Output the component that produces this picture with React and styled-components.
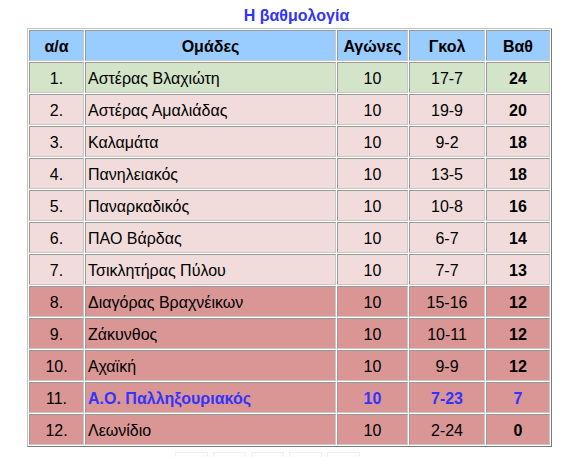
import React from "react";
import styled, { createGlobalStyle } from "styled-components";

const GlobalStyle = createGlobalStyle`
    body {
        margin: 0;
        background: #ffffff;
        font-family: "Liberation Sans", Arial, sans-serif;
    }
`

const Page = styled.div`
    padding: 7px 0 0 27px;
    width: 525px;
`

const Titlos = styled.div`
    text-align: center;
    padding-left: 14px;
    font-size: 16px;
    font-weight: bold;
    color: #3333ff;
    line-height: 18px;
    margin-bottom: 3px;
`

const Pinakas = styled.table`
    border: 1px solid;
    border-color: #c4c4c4 #7a7a7a #7a7a7a #c4c4c4;
    border-spacing: 1px;
    table-layout: fixed;
    width: 525px;
    font-size: 16px;
`

const Kelli = styled.td`
    box-sizing: border-box;
    border: 1px solid;
    border-color: #9a9a9a #c8c8c8 #c8c8c8 #9a9a9a;
    height: 31px;
    padding: 2px 2px 0;
    width: ${p => p.$w ? p.$w + "px" : "auto"};
    text-align: ${p => p.$align || "center"};
    font-weight: ${p => p.$bold ? "bold" : "normal"};
    background: ${p => p.$bg};
    color: ${p => p.$blue ? "#3333ff" : "#000000"};
`

const Epikefalida = styled(Kelli).attrs({ as: "th" })`
    font-weight: bold;
    background: #99ccff;
`

const Koumpia = styled.div`
    display: flex;
    gap: 5px;
    margin: 5px 0 0 148px;
`

const Koumpi = styled.div`
    width: 31px;
    height: 20px;
    border: 1px solid #f0f0f0;
    border-bottom: none;
    background: #fdfdfd;
`

const xromata = {
    prwtos: "#d3e4c9",
    mesi: "#f2dcdb",
    katw: "#d99694"
}

const omades = [
    ["1.", "Αστέρας Βλαχιώτη", "10", "17-7", "24", "prwtos"],
    ["2.", "Αστέρας Αμαλιάδας", "10", "19-9", "20", "mesi"],
    ["3.", "Καλαμάτα", "10", "9-2", "18", "mesi"],
    ["4.", "Πανηλειακός", "10", "13-5", "18", "mesi"],
    ["5.", "Παναρκαδικός", "10", "10-8", "16", "mesi"],
    ["6.", "ΠΑΟ Βάρδας", "10", "6-7", "14", "mesi"],
    ["7.", "Τσικλητήρας Πύλου", "10", "7-7", "13", "mesi"],
    ["8.", "Διαγόρας Βραχνέικων", "10", "15-16", "12", "katw"],
    ["9.", "Ζάκυνθος", "10", "10-11", "12", "katw"],
    ["10.", "Αχαϊκή", "10", "9-9", "12", "katw"],
    ["11.", "Α.Ο. Παλληξουριακός", "10", "7-23", "7", "katw", true],
    ["12.", "Λεωνίδιο", "10", "2-24", "0", "katw"]
]

export default function App() {
    return (
        <Page>
            <GlobalStyle />
            <Titlos>Η βαθμολογία</Titlos>
            <Pinakas>
                <thead>
                    <tr>
                        <Epikefalida $w={55}>α/α</Epikefalida>
                        <Epikefalida $w={251}>Ομάδες</Epikefalida>
                        <Epikefalida $w={71}>Αγώνες</Epikefalida>
                        <Epikefalida $w={76}>Γκολ</Epikefalida>
                        <Epikefalida $w={64}>Βαθ</Epikefalida>
                    </tr>
                </thead>
                <tbody>
                    {omades.map(([thesi, onoma, agones, gkol, vath, xroma, emeis]) => (
                        <tr key={thesi}>
                            <Kelli $bg={xromata[xroma]}>{thesi}</Kelli>
                            <Kelli $bg={xromata[xroma]} $align="left" $bold={emeis} $blue={emeis}>{onoma}</Kelli>
                            <Kelli $bg={xromata[xroma]} $bold={emeis} $blue={emeis}>{agones}</Kelli>
                            <Kelli $bg={xromata[xroma]} $bold={emeis} $blue={emeis}>{gkol}</Kelli>
                            <Kelli $bg={xromata[xroma]} $bold $blue={emeis}>{vath}</Kelli>
                        </tr>
                    ))}
                </tbody>
            </Pinakas>
            <Koumpia>
                <Koumpi />
                <Koumpi />
                <Koumpi />
                <Koumpi />
                <Koumpi />
            </Koumpia>
        </Page>
    )
}
